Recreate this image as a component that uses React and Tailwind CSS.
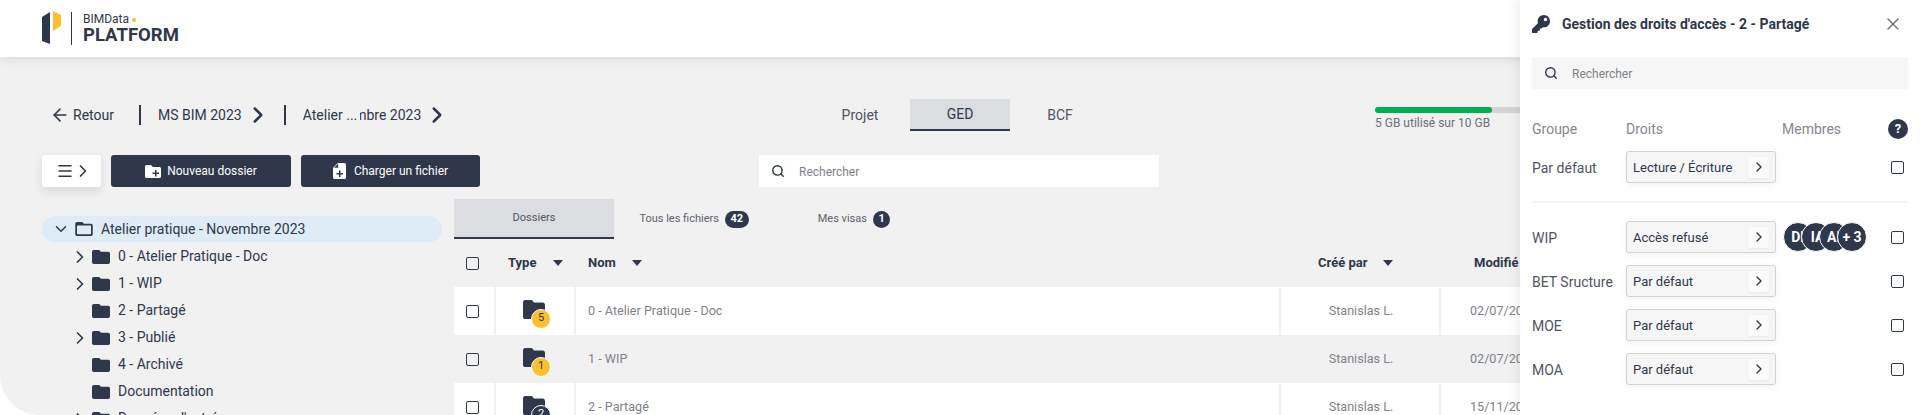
import React from "react";
import { ArrowLeft, ChevronRight, ChevronDown, Menu, Search, X } from "lucide-react";
import { FaKey } from "react-icons/fa";

const FOLDER = "M10 4H4c-1.1 0-2 .9-2 2v12c0 1.1.9 2 2 2h16c1.1 0 2-.9 2-2V8c0-1.1-.9-2-2-2h-8l-2-2z";

const Folder = ({ className }) => (
  <svg viewBox="2 4 20 16" className={className} fill="currentColor" preserveAspectRatio="none"><path d={FOLDER} /></svg>
);

const Check = ({ className = "" }) => (
  <div className={`w-[13px] h-[13px] shrink-0 border-[1.5px] border-[#2f374a] rounded-[2px] ${className}`} />
);

const Caret = () => (
  <svg width="10" height="6" viewBox="0 0 10 6" className="text-[#2f374a]" fill="currentColor"><path d="M0 0h10L5 6z" /></svg>
);

const Crumb = ({ children }) => (
  <div className="flex items-center">
    <div className="w-[2px] h-[20px] bg-[#2f374a] mr-[17px]" />
    {children}
    <ChevronRight size={26} strokeWidth={2.3} className="ml-[3px] mr-[13px] text-[#2f374a]" />
  </div>
);

const TreeRow = ({ label, arrow }) => (
  <div className="flex items-center h-[27px] pl-[31px]">
    <div className="w-[20px] shrink-0">
      {arrow && <ChevronRight size={20} strokeWidth={2} className="text-[#2f374a] -ml-[3px]" />}
    </div>
    <Folder className="w-[18px] h-[14px] text-[#2f374a] ml-[-1px]" />
    <span className="ml-[8px] whitespace-nowrap">{label}</span>
  </div>
);

const TableRow = ({ white, name, date, count, dark }) => {
  const bg = white ? "bg-white" : "";
  return (
    <div className="flex h-[48px] gap-[2px] text-[12.6px] text-[#7f8289]">
      <div className={`w-[40px] flex items-center pl-[12px] ${bg}`}><Check /></div>
      <div className={`w-[78px] flex items-center justify-center ${bg}`}>
        <div className="relative w-[22px] h-[19px] text-[#2f374a] -mt-[4px] -ml-[2px]">
          <Folder className="w-[22px] h-[19px]" />
          <div className={`absolute left-[8px] top-[9px] w-[20px] h-[20px] rounded-full border border-white flex items-center justify-center text-[11px] ${dark ? "bg-[#2f374a] text-white" : "bg-[#fbc02d] text-[#2f374a]"}`}>{count}</div>
        </div>
      </div>
      <div className={`w-[703px] flex items-center pl-[12px] ${bg}`}>{name}</div>
      <div className={`w-[158px] flex items-center justify-center pl-[2px] ${bg}`}>Stanislas L.</div>
      <div className={`flex-1 flex items-center pl-[29px] ${bg}`}>{date}</div>
    </div>
  );
};

const Pill = ({ children }) => (
  <span className="ml-[6px] h-[17px] min-w-[17px] px-[5.5px] rounded-full bg-[#2f374a] text-white text-[11px] font-bold flex items-center justify-center">{children}</span>
);

const Right = ({ label, value, avatars }) => (
  <div className="flex items-center h-[32px]">
    <div className="w-[94px] text-[14px] text-[#4f5463] whitespace-nowrap mt-[2px]">{label}</div>
    <div className="w-[150px] h-[32px] flex items-center justify-between pl-[6px] pr-[6px] border border-[#d2d2d2] rounded-[3px] bg-[#f6f6f6] text-[13px] text-[#2f374a] shadow-[0_2px_6px_rgba(0,0,0,0.05)]">
      <span className="mt-[1px]">{value}</span>
      <span className="w-[21px] h-[21px] rounded-[3px] bg-[#fbfbfb] shadow-[0_1px_3px_rgba(0,0,0,0.06)] flex items-center justify-center"><ChevronRight size={16} strokeWidth={2} /></span>
    </div>
    <div className="flex-1 flex items-center pl-[7px]">
      {avatars && ["DL", "IA", "AL", "+ 3"].map((a, i) => (
        <div key={a} className={`w-[30px] h-[30px] rounded-full bg-[#2f374a] border border-white text-white text-[14px] font-bold flex items-center justify-center whitespace-pre ${i ? "-ml-[12px]" : ""} ${i < 3 ? "pl-[3px]" : ""}`}>{a}</div>
      ))}
    </div>
    <Check className="mr-[4px]" />
  </div>
);

export default function App() {
  return (
    <div className="relative h-[415px] w-[1920px] overflow-hidden bg-white font-['Roboto',sans-serif] text-[#2f374a]">
      <div className="h-full rounded-bl-[40px] bg-[#f1f1f1] overflow-hidden">
        <header className="relative z-10 h-[57px] bg-white shadow-[0_2px_10px_rgba(0,0,0,0.1)] flex items-center pl-[42px]">
          <svg width="20" height="34" viewBox="42 7 20 34" className="mb-[1px]">
            <path d="M42 13l8-5v32l-8-3z" fill="#2f374a" />
            <path d="M53 7l8 4v11l-8 5z" fill="#fbc02d" />
          </svg>
          <div className="w-px h-[33px] bg-[#2f374a] ml-[9px] mr-[11px] mb-[1px]" />
          <div className="flex flex-col -mt-[1px]">
            <div className="flex items-center text-[12px] leading-[14px] text-[#2f374a]">BIMData<span className="w-[4px] h-[4px] rounded-full bg-[#fbc02d] ml-[3px] mt-[3px]" /></div>
            <div className="text-[18.5px] leading-[19px] font-bold">PLATFORM</div>
          </div>
        </header>

        <div className="flex items-center h-[32px] mt-[42px] pl-[42px]">
          <div className="w-[768px] flex items-center text-[14px]">
            <div className="w-[97px] flex items-center pl-[8px]">
              <ArrowLeft size={20} strokeWidth={1.9} />
              <span className="ml-[3px]">Retour</span>
            </div>
            <Crumb>MS BIM 2023</Crumb>
            <Crumb>
              <span className="whitespace-nowrap">Atelier ...</span>
              <span className="w-[61px] overflow-hidden flex justify-end whitespace-nowrap ml-[3px]">mbre 2023</span>
            </Crumb>
          </div>
          <div className="flex text-[14px]">
            <div className="w-[100px] h-[32px] flex items-center justify-center text-[#4f5463]">Projet</div>
            <div className="w-[100px] h-[32px] flex items-center justify-center bg-[#dcdde0] border-b-2 border-[#2f374a]">GED</div>
            <div className="w-[100px] h-[32px] flex items-center justify-center text-[#4f5463]">BCF</div>
          </div>
          <div className="ml-[265px] w-[234px] mt-[7px]">
            <div className="h-[6px] rounded-full bg-[#d4d4d4]"><div className="h-full w-1/2 rounded-full bg-[#00b050]" /></div>
            <div className="mt-[2px] text-[12px] leading-[16px] text-[#6b6f78]">5 GB utilisé sur 10 GB</div>
          </div>
        </div>

        <div className="flex items-center h-[32px] mt-[24px] pl-[42px]">
          <div className="w-[59px] h-[32px] bg-white rounded-[3px] shadow-[0_4px_10px_rgba(0,0,0,0.1)] flex items-center justify-center pl-[6px]">
            <Menu size={18} strokeWidth={2} />
            <ChevronRight size={20} strokeWidth={2} className="-ml-[1px]" />
          </div>
          <button className="ml-[10px] w-[180px] h-[32px] bg-[#2f374a] rounded-[3px] text-white text-[12px] flex items-center justify-center">
            <svg width="16" height="13" viewBox="0 0 16 13" className="mr-[6px]"><path d="M1.5 0H6l2 2h6.5A1.5 1.5 0 0 1 16 3.5v8a1.5 1.5 0 0 1-1.5 1.5h-13A1.5 1.5 0 0 1 0 11.5v-10A1.5 1.5 0 0 1 1.5 0z" fill="#fff" /><path d="M10 5v2.5H7.5V9H10v2.5h1.5V9H14V7.5h-2.5V5z" fill="#2f374a" /></svg>
            Nouveau dossier
          </button>
          <button className="ml-[10px] w-[179px] h-[32px] bg-[#2f374a] rounded-[3px] text-white text-[12px] flex items-center justify-center">
            <svg width="13" height="16" viewBox="0 0 13 16" className="mr-[8px]"><path d="M5 0h6.5A1.5 1.5 0 0 1 13 1.5v13a1.5 1.5 0 0 1-1.5 1.5h-10A1.5 1.5 0 0 1 0 14.5V5z" fill="#fff" /><path d="M5.5 0v5H.5z" fill="#2f374a" stroke="#fff" strokeWidth=".6" /><path d="M6 7.5V10H3.5v1.5H6V14h1.500v-2.500H10V10H7.500V7.500z" fill="#2f374a" /></svg>
            Charger un fichier
          </button>
          <div className="ml-[279px] w-[400px] h-[32px] bg-white flex items-center pl-[12px] text-[12px] text-[#7f8289]">
            <Search size={14} strokeWidth={2.4} className="text-[#2f374a]" />
            <span className="ml-[14px] mt-[1px]">Rechercher</span>
          </div>
        </div>

        <div className="flex mt-[12px]">
          <div className="ml-[42px] w-[400px] pt-[17px] text-[14px]">
            <div className="h-[26px] rounded-full bg-[#deecf8] flex items-center pl-[11px] mb-[1px]">
              <ChevronDown size={18} strokeWidth={2} className="-ml-[1px]" />
              <svg viewBox="2 4 20 16" className="w-[18px] h-[14px] ml-[5px]" fill="currentColor"><path d="M20 6h-8l-2-2H4c-1.1 0-2 .9-2 2v12c0 1.1.9 2 2 2h16c1.1 0 2-.9 2-2V8c0-1.1-.9-2-2-2zm0 12H4V8h16v10z" /></svg>
              <span className="ml-[8px] whitespace-nowrap">Atelier pratique - Novembre 2023</span>
            </div>
            <TreeRow label="0 - Atelier Pratique - Doc" arrow />
            <TreeRow label="1 - WIP" arrow />
            <TreeRow label="2 - Partagé" />
            <TreeRow label="3 - Publié" arrow />
            <TreeRow label="4 - Archivé" />
            <TreeRow label="Documentation" />
            <TreeRow label="Données d'entrée" arrow />
          </div>

          <div className="ml-[12px] flex-1">
            <div className="flex h-[40px] text-[11px] text-[#5e626d]">
              <div className="w-[160px] bg-[#dcdde0] border-b-2 border-[#2f374a] flex items-center justify-center text-[#4f5463]">Dossiers</div>
              <div className="w-[160px] flex items-center justify-center pt-[1px]">Tous les fichiers<Pill>42</Pill></div>
              <div className="w-[160px] flex items-center justify-center pt-[1px]">Mes visas<Pill>1</Pill></div>
            </div>
            <div className="flex h-[48px] items-center text-[13px] font-bold">
              <div className="w-[54px] pl-[12px]"><Check /></div>
              <span className="w-[28px]">Type</span>
              <span className="ml-[17px]"><Caret /></span>
              <span className="ml-[25px] w-[27px]">Nom</span>
              <span className="ml-[17px]"><Caret /></span>
              <span className="ml-[676px] w-[48px] whitespace-nowrap">Créé par</span>
              <span className="ml-[17px]"><Caret /></span>
              <span className="ml-[81px]">Modifié</span>
            </div>
            <TableRow white name="0 - Atelier Pratique - Doc" date="02/07/2024" count="5" />
            <TableRow name="1 - WIP" date="02/07/2024" count="1" />
            <TableRow white name="2 - Partagé" date="15/11/2023" count="2" dark />
          </div>
        </div>
      </div>

      <aside className="absolute z-20 right-0 top-0 w-[400px] h-[415px] bg-white shadow-[-4px_0_10px_rgba(0,0,0,0.06)] px-[12px]">
        <div className="flex items-center h-[24px] mt-[12px]">
          <FaKey size={18} className="text-[#2f374a] mb-[1px]" />
          <span className="ml-[12px] text-[14px] font-bold text-[#2f374a] whitespace-nowrap">Gestion des droits d'accès - 2 - Partagé</span>
          <X size={20} strokeWidth={1.6} className="ml-auto mr-[5px] text-[#6b6f78]" />
        </div>
        <div className="mt-[21px] h-[32px] bg-[#f6f6f6] flex items-center pl-[12px] text-[12px] text-[#7f8289]">
          <Search size={14} strokeWidth={2.4} className="text-[#2f374a]" />
          <span className="ml-[14px] mt-[1px]">Rechercher</span>
        </div>
        <div className="mt-[30px] flex items-center h-[20px] text-[14px] text-[#85888f]">
          <span className="w-[94px]">Groupe</span>
          <span className="w-[156px]">Droits</span>
          <span>Membres</span>
          <span className="ml-auto w-[20px] h-[20px] rounded-full bg-[#2f374a] text-white text-[13px] font-bold flex items-center justify-center">?</span>
        </div>
        <div className="mt-[12px]"><Right label="Par défaut" value="Lecture / Écriture" /></div>
        <div className="mt-[18px] h-[2px] bg-[#f3f3f3]" />
        <div className="mt-[18px] flex flex-col gap-[12px]">
          <Right label="WIP" value="Accès refusé" avatars />
          <Right label="BET Sructure" value="Par défaut" />
          <Right label="MOE" value="Par défaut" />
          <Right label="MOA" value="Par défaut" />
        </div>
      </aside>
    </div>
  );
}
